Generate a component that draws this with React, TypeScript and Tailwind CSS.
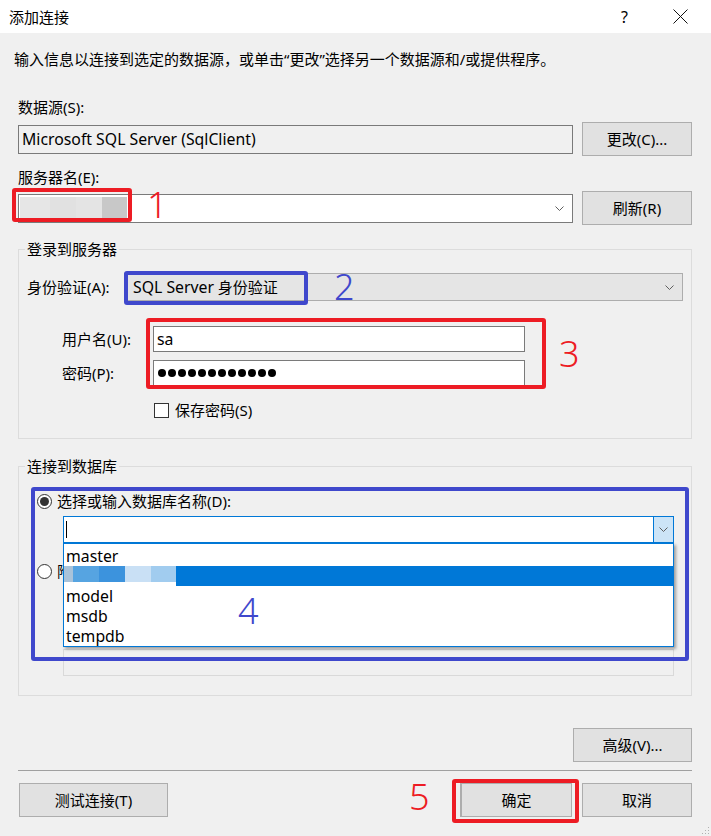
import React from "react";

function Chevron() {
  return (
    <svg width="9" height="5" viewBox="0 0 9 5" className="block">
      <path d="M0.5 0.5 L4.5 4.5 L8.5 0.5" fill="none" stroke="#5f5f5f" strokeWidth="1" />
    </svg>
  );
}

function Btn({ children, className = "" }: { children: React.ReactNode; className?: string }) {
  return (
    <div
      className={
        "h-[34px] bg-[#e1e1e1] border border-[#adadad] flex items-center justify-center text-[15px] " + className
      }
    >
      {children}
    </div>
  );
}

export default function App() {
  const dots = Array.from({ length: 12 });
  return (
    <div className="relative w-[711px] h-[836px] bg-[#f0f0f0] overflow-hidden text-black text-[15px] leading-[20px] font-['Noto_Sans','Noto_Sans_CJK_SC',sans-serif]">
      {/* title bar */}
      <div className="h-[33px] bg-white flex items-center pl-[9px]">
        <span>添加连接</span>
        <span className="ml-auto mr-[45px] text-[16px]">?</span>
        <svg width="15" height="15" viewBox="0 0 15 15" className="mr-[23px]">
          <path d="M0.5 0.5 L14.5 14.5 M14.5 0.5 L0.5 14.5" stroke="#111" strokeWidth="1" />
        </svg>
      </div>

      <div className="pl-[18px] pr-[19px] flex flex-col">
        <p className="mt-[16px] -ml-[4px]">输入信息以连接到选定的数据源，或单击“更改”选择另一个数据源和/或提供程序。</p>

        <p className="mt-[28px]">数据源(S):</p>
        <div className="mt-[5px] flex items-center">
          <div className="w-[555px] h-[29px] border border-[#7a7a7a] bg-[#f0f0f0] flex items-center pl-[3px] text-[15.8px]">
            Microsoft SQL Server (SqlClient)
          </div>
          <Btn className="ml-[9px] w-[110px] h-[33px]">更改(C)...</Btn>
        </div>

        <p className="mt-[11px]">服务器名(E):</p>
        <div className="mt-[4px] flex items-center">
          <div className="w-[555px] h-[29px] border border-[#7a7a7a] bg-white flex items-center pl-[1px] pr-[8px]">
            <div className="flex h-[22px]">
              <div className="w-[30px] bg-[#e6e6e6]" />
              <div className="w-[26px] bg-[#e1e1e1]" />
              <div className="w-[26px] bg-[#e4e4e4]" />
              <div className="w-[25px] bg-[#c8c8c8]" />
            </div>
            <span className="ml-auto">
              <Chevron />
            </span>
          </div>
          <Btn className="ml-[9px] w-[110px]">刷新(R)</Btn>
        </div>

        {/* login group */}
        <fieldset className="mt-[14px] border border-[#dcdcdc] pl-[8px] pr-[8px] pb-[18px]">
          <legend className="-ml-[2px] px-[2px]">登录到服务器</legend>
          <div className="mt-[14px] flex items-center">
            <span className="w-[97px]">身份验证(A):</span>
            <div className="flex-1 h-[28px] bg-[#e5e5e5] border border-[#adadad] flex items-center pl-[8px] pr-[8px]">
              <span>
                <span className="text-[15.8px]">SQL Server</span> 身份验证
              </span>
              <span className="ml-auto">
                <Chevron />
              </span>
            </div>
          </div>
          <div className="mt-[25px] ml-[35px] grid grid-cols-[91px_372px] gap-y-[8px] items-center">
            <span>用户名(U):</span>
            <div className="h-[26px] border border-[#7a7a7a] bg-white flex items-center pl-[3px] text-[15.8px]">sa</div>
            <span>密码(P):</span>
            <div className="h-[26px] border border-[#7a7a7a] bg-white flex items-center pl-[4px] gap-[2px]">
              {dots.map((_, i) => (
                <span key={i} className="w-[8px] h-[8px] rounded-full bg-black" />
              ))}
            </div>
          </div>
          <div className="mt-[14px] ml-[127px] h-[20px] flex items-center">
            <span className="w-[15px] h-[15px] border border-[#333] bg-white" />
            <span className="ml-[6px]">保存密码(S)</span>
          </div>
        </fieldset>

        {/* database group */}
        <fieldset className="mt-[17px] border border-[#dcdcdc] pl-[8px] pr-[8px] pb-[19px]">
          <legend className="-ml-[2px] px-[2px]">连接到数据库</legend>
          <div className="mt-[15px] ml-[10px] h-[20px] flex items-center">
            <span className="w-[15px] h-[15px] rounded-full border border-[#333] bg-white flex items-center justify-center">
              <span className="w-[9px] h-[9px] rounded-full bg-[#333]" />
            </span>
            <span className="ml-[5px]">选择或输入数据库名称(D):</span>
          </div>
          <div className="mt-[5px] ml-[36px] w-[611px] h-[27px] border border-[#0078d7] bg-white flex">
            <div className="flex-1 flex items-center pl-[2px]">
              <span className="w-px h-[17px] bg-black" />
            </div>
            <div className="w-[20px] bg-[#cce4f7] border-l border-[#0078d7] flex items-center justify-center">
              <Chevron />
            </div>
          </div>
          <div className="mt-[18px] ml-[10px] h-[20px] flex items-center">
            <span className="w-[15px] h-[15px] rounded-full border border-[#333] bg-white" />
            <span className="ml-[5px]">附加数据库文件(H):</span>
          </div>
          <div className="mt-[68px] ml-[36px] w-[611px] h-[27px] border border-[#d9d9d9] bg-[#f0f0f0]" />
        </fieldset>

        <Btn className="mt-[32px] self-end w-[119px]">高级(V)...</Btn>
        <div className="mt-[8px] h-px bg-[#a0a0a0]" />
        <div className="mt-[12px] flex items-center">
          <Btn className="ml-[1px] w-[149px]">测试连接(T)</Btn>
          <Btn className="ml-auto w-[112px] border-[#0078d7] border-l-2">确定</Btn>
          <Btn className="ml-[10px] w-[110px]">取消</Btn>
        </div>
      </div>

      {/* dropdown list overlay */}
      <div className="absolute left-[63px] top-[543px] w-[611px] border border-[#0078d7] bg-white pt-[1px] shadow-[2px_2px_3px_rgba(0,0,0,0.35)] text-[15.8px]">
        <div className="h-[21px] pl-[2px] flex items-center">master</div>
        <div className="h-[20px] bg-[#0078d7] flex">
          <div className="flex flex-col">
            <div className="flex h-[16px]">
              <div className="w-[9px] bg-[#a9c3da]" />
              <div className="w-[26px] bg-[#56a4e1]" />
              <div className="w-[26px] bg-[#3c93dd]" />
              <div className="w-[26px] bg-[#c9e0f5]" />
              <div className="w-[25px] bg-[#a1ccef]" />
            </div>
            <div className="h-[4px] bg-white" />
          </div>
        </div>
        <div className="h-[20px] pl-[2px] flex items-center">model</div>
        <div className="h-[20px] pl-[2px] flex items-center">msdb</div>
        <div className="h-[20px] pl-[2px] flex items-center">tempdb</div>
      </div>

      {/* annotations */}
      <div className="absolute left-[12px] top-[188px] w-[120px] h-[34px] border-[4px] border-[#ed1c24] rounded-[3px]" />
      <div className="absolute left-[147px] top-[183px] text-[36px] leading-[44px] font-light text-[#ed1c24]">1</div>

      <div className="absolute left-[124px] top-[271px] w-[184px] h-[34px] border-[4px] border-[#3f48cc] rounded-[3px]" />
      <div className="absolute left-[334px] top-[265px] text-[36px] leading-[44px] font-light text-[#3f48cc]">2</div>

      <div className="absolute left-[146px] top-[318px] w-[400px] h-[71px] border-[4px] border-[#ed1c24] rounded-[3px]" />
      <div className="absolute left-[559px] top-[332px] text-[36px] leading-[44px] font-light text-[#ed1c24]">3</div>

      <div className="absolute left-[31px] top-[487px] w-[658px] h-[174px] border-[4px] border-[#3f48cc] rounded-[3px]" />
      <div className="absolute left-[238px] top-[589px] text-[36px] leading-[44px] font-light text-[#3f48cc]">4</div>

      <div className="absolute left-[452px] top-[779px] w-[127px] h-[44px] border-[4px] border-[#ed1c24] rounded-[3px]" />
      <div className="absolute left-[409px] top-[775px] text-[36px] leading-[44px] font-light text-[#ed1c24]">5</div>

      {/* resize grip */}
      <svg className="absolute right-[1px] bottom-[1px]" width="10" height="10" viewBox="0 0 10 10">
        <rect x="8" y="2" width="1" height="1" fill="#b0b0b0" />
        <rect x="5" y="5" width="1" height="1" fill="#b0b0b0" />
        <rect x="8" y="5" width="1" height="1" fill="#b0b0b0" />
        <rect x="2" y="8" width="1" height="1" fill="#b0b0b0" />
        <rect x="5" y="8" width="1" height="1" fill="#b0b0b0" />
        <rect x="8" y="8" width="1" height="1" fill="#b0b0b0" />
      </svg>
    </div>
  );
}
